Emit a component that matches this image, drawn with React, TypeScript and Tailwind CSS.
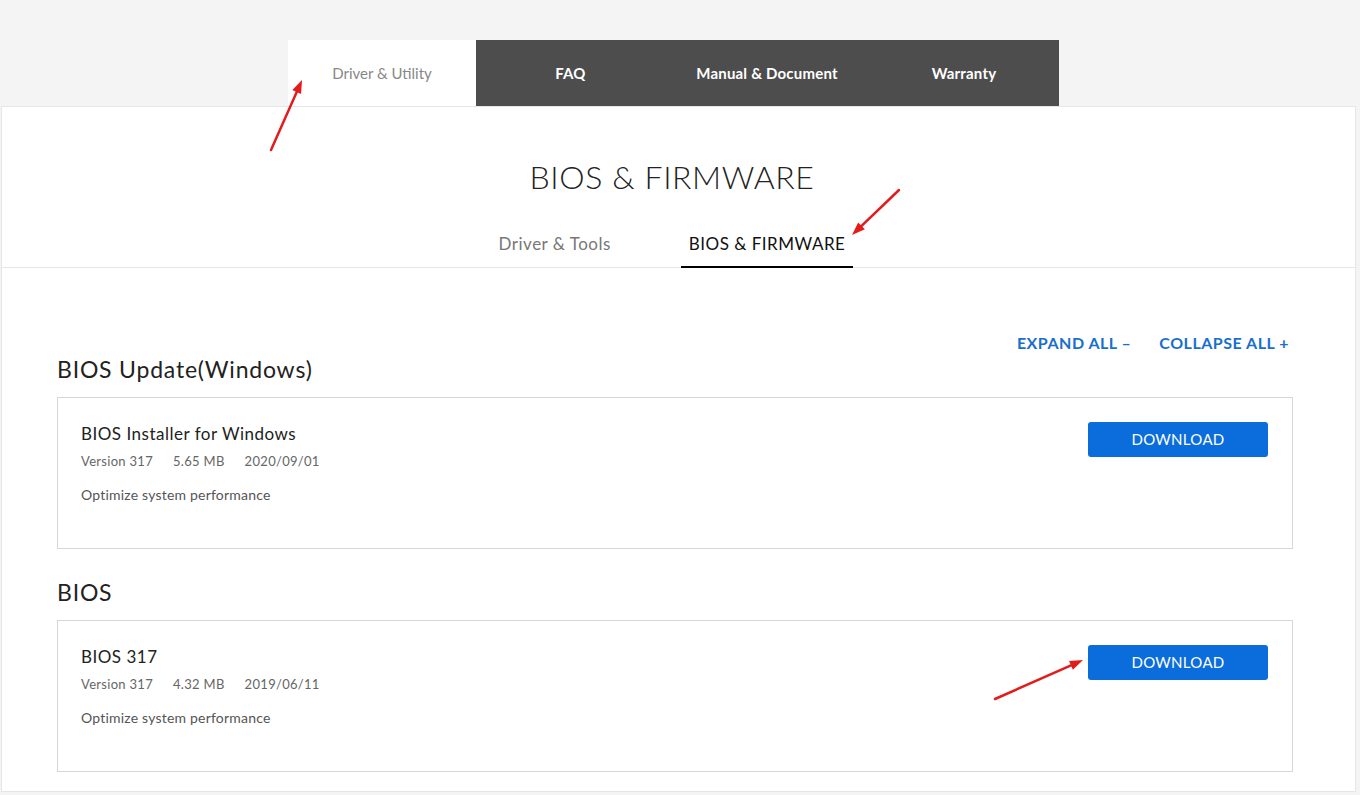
import React from 'react'

const topTabs = [
  { label: 'Driver & Utility', w: 'w-[188px]', active: true },
  { label: 'FAQ', w: 'w-[189px]', active: false },
  { label: 'Manual & Document', w: 'w-[204px]', active: false },
  { label: 'Warranty', w: 'w-[190px]', active: false },
]

const sections = [
  {
    heading: 'BIOS Update(Windows)',
    title: 'BIOS Installer for Windows',
    meta: ['Version 317', '5.65 MB', '2020/09/01'],
    desc: 'Optimize system performance',
  },
  {
    heading: 'BIOS',
    title: 'BIOS 317',
    meta: ['Version 317', '4.32 MB', '2019/06/11'],
    desc: 'Optimize system performance',
  },
]

// red annotation arrow, drawn over the page
const Arrow = ({ x1, y1, x2, y2 }: { x1: number; y1: number; x2: number; y2: number }) => {
  const a = Math.atan2(y2 - y1, x2 - x1)
  const len = 14
  const spread = 0.35
  const p1 = [x2 - len * Math.cos(a - spread), y2 - len * Math.sin(a - spread)]
  const p2 = [x2 - len * Math.cos(a + spread), y2 - len * Math.sin(a + spread)]
  const bx = x2 - 10 * Math.cos(a)
  const by = y2 - 10 * Math.sin(a)
  return (
    <g>
      <line x1={x1} y1={y1} x2={bx} y2={by} stroke="#e31b1b" strokeWidth="2.5" strokeLinecap="round" />
      <polygon points={`${x2},${y2} ${p1[0]},${p1[1]} ${p2[0]},${p2[1]}`} fill="#e31b1b" />
    </g>
  )
}

const ItemCard = ({ s }: { s: (typeof sections)[number] }) => (
  <div className="flex h-[152px] justify-between border border-[#d6d6d6] bg-white pl-[23px] pr-[24px] pt-[24px]">
    <div>
      <div className="text-[17px] leading-[24px] tracking-[0.5px] text-[#222]">{s.title}</div>
      <div className="mt-[5px] flex gap-[20px] text-[13px] leading-[20px] tracking-[0.3px] text-[#666]">
        {s.meta.map((m) => (
          <span key={m}>{m}</span>
        ))}
      </div>
      <div className="mt-[14px] text-[14px] leading-[20px] tracking-[0.2px] text-[#555]">{s.desc}</div>
    </div>
    <button className="h-[35px] w-[180px] rounded-[3px] bg-[#0a6ddb] text-[15px] tracking-[0.3px] text-white">
      DOWNLOAD
    </button>
  </div>
)

export default function App() {
  return (
    <div className="relative min-h-[795px] bg-[#f4f4f4] font-['Lato',sans-serif]">
      <div className="flex justify-center pr-[13px] pt-[40px]">
        {topTabs.map((t) => (
          <div
            key={t.label}
            className={
              t.active
                ? `${t.w} flex h-[66px] items-center justify-center bg-white text-[15px] text-[#888]`
                : `${t.w} flex h-[66px] items-center justify-center bg-[#4d4d4d] text-[15px] font-bold tracking-[0.2px] text-white`
            }
          >
            {t.label}
          </div>
        ))}
      </div>

      <div className="ml-[1px] mr-[4px] border border-[#e6e6e6] bg-white">
        <div className="border-b border-[#e6e6e6]">
          <h1 className="pr-[13px] pt-[50px] text-center text-[32px] font-light leading-[40px] tracking-[0.6px] text-[#222]">
            BIOS &amp; FIRMWARE
          </h1>
          <div className="mt-[37px] flex justify-center gap-[62px] pr-[13px]">
            <div className="px-[8px] pb-[13px] text-[17px] leading-[20px] tracking-[0.5px] text-[#777]">
              Driver &amp; Tools
            </div>
            <div className="-mb-px border-b-2 border-black px-[8px] pb-[12px] text-[17px] leading-[20px] tracking-[0.5px] text-[#111]">
              BIOS &amp; FIRMWARE
            </div>
          </div>
        </div>

        <div className="pb-[19px] pl-[55px] pr-[62px]">
          <div className="mt-[65px] flex h-[20px] justify-end gap-[28px] pr-[4px] text-[16px] font-bold leading-[20px] tracking-[0.5px] text-[#1a6fcc]">
            <span>EXPAND ALL &#8211;</span>
            <span>COLLAPSE ALL +</span>
          </div>
          {sections.map((s, i) => (
            <div key={s.heading} className={i === 0 ? 'mt-[2px]' : 'mt-[29px]'}>
              <h2 className="mb-[14px] text-[23px] leading-[28px] tracking-[0.8px] text-[#222]">{s.heading}</h2>
              <ItemCard s={s} />
            </div>
          ))}
        </div>
      </div>

      <svg className="pointer-events-none absolute left-0 top-0" width="1360" height="795">
        <Arrow x1={271} y1={150} x2={302} y2={80} />
        <Arrow x1={899} y1={190} x2={852} y2={235} />
        <Arrow x1={995} y1={699} x2={1083} y2={660} />
      </svg>
    </div>
  )
}
